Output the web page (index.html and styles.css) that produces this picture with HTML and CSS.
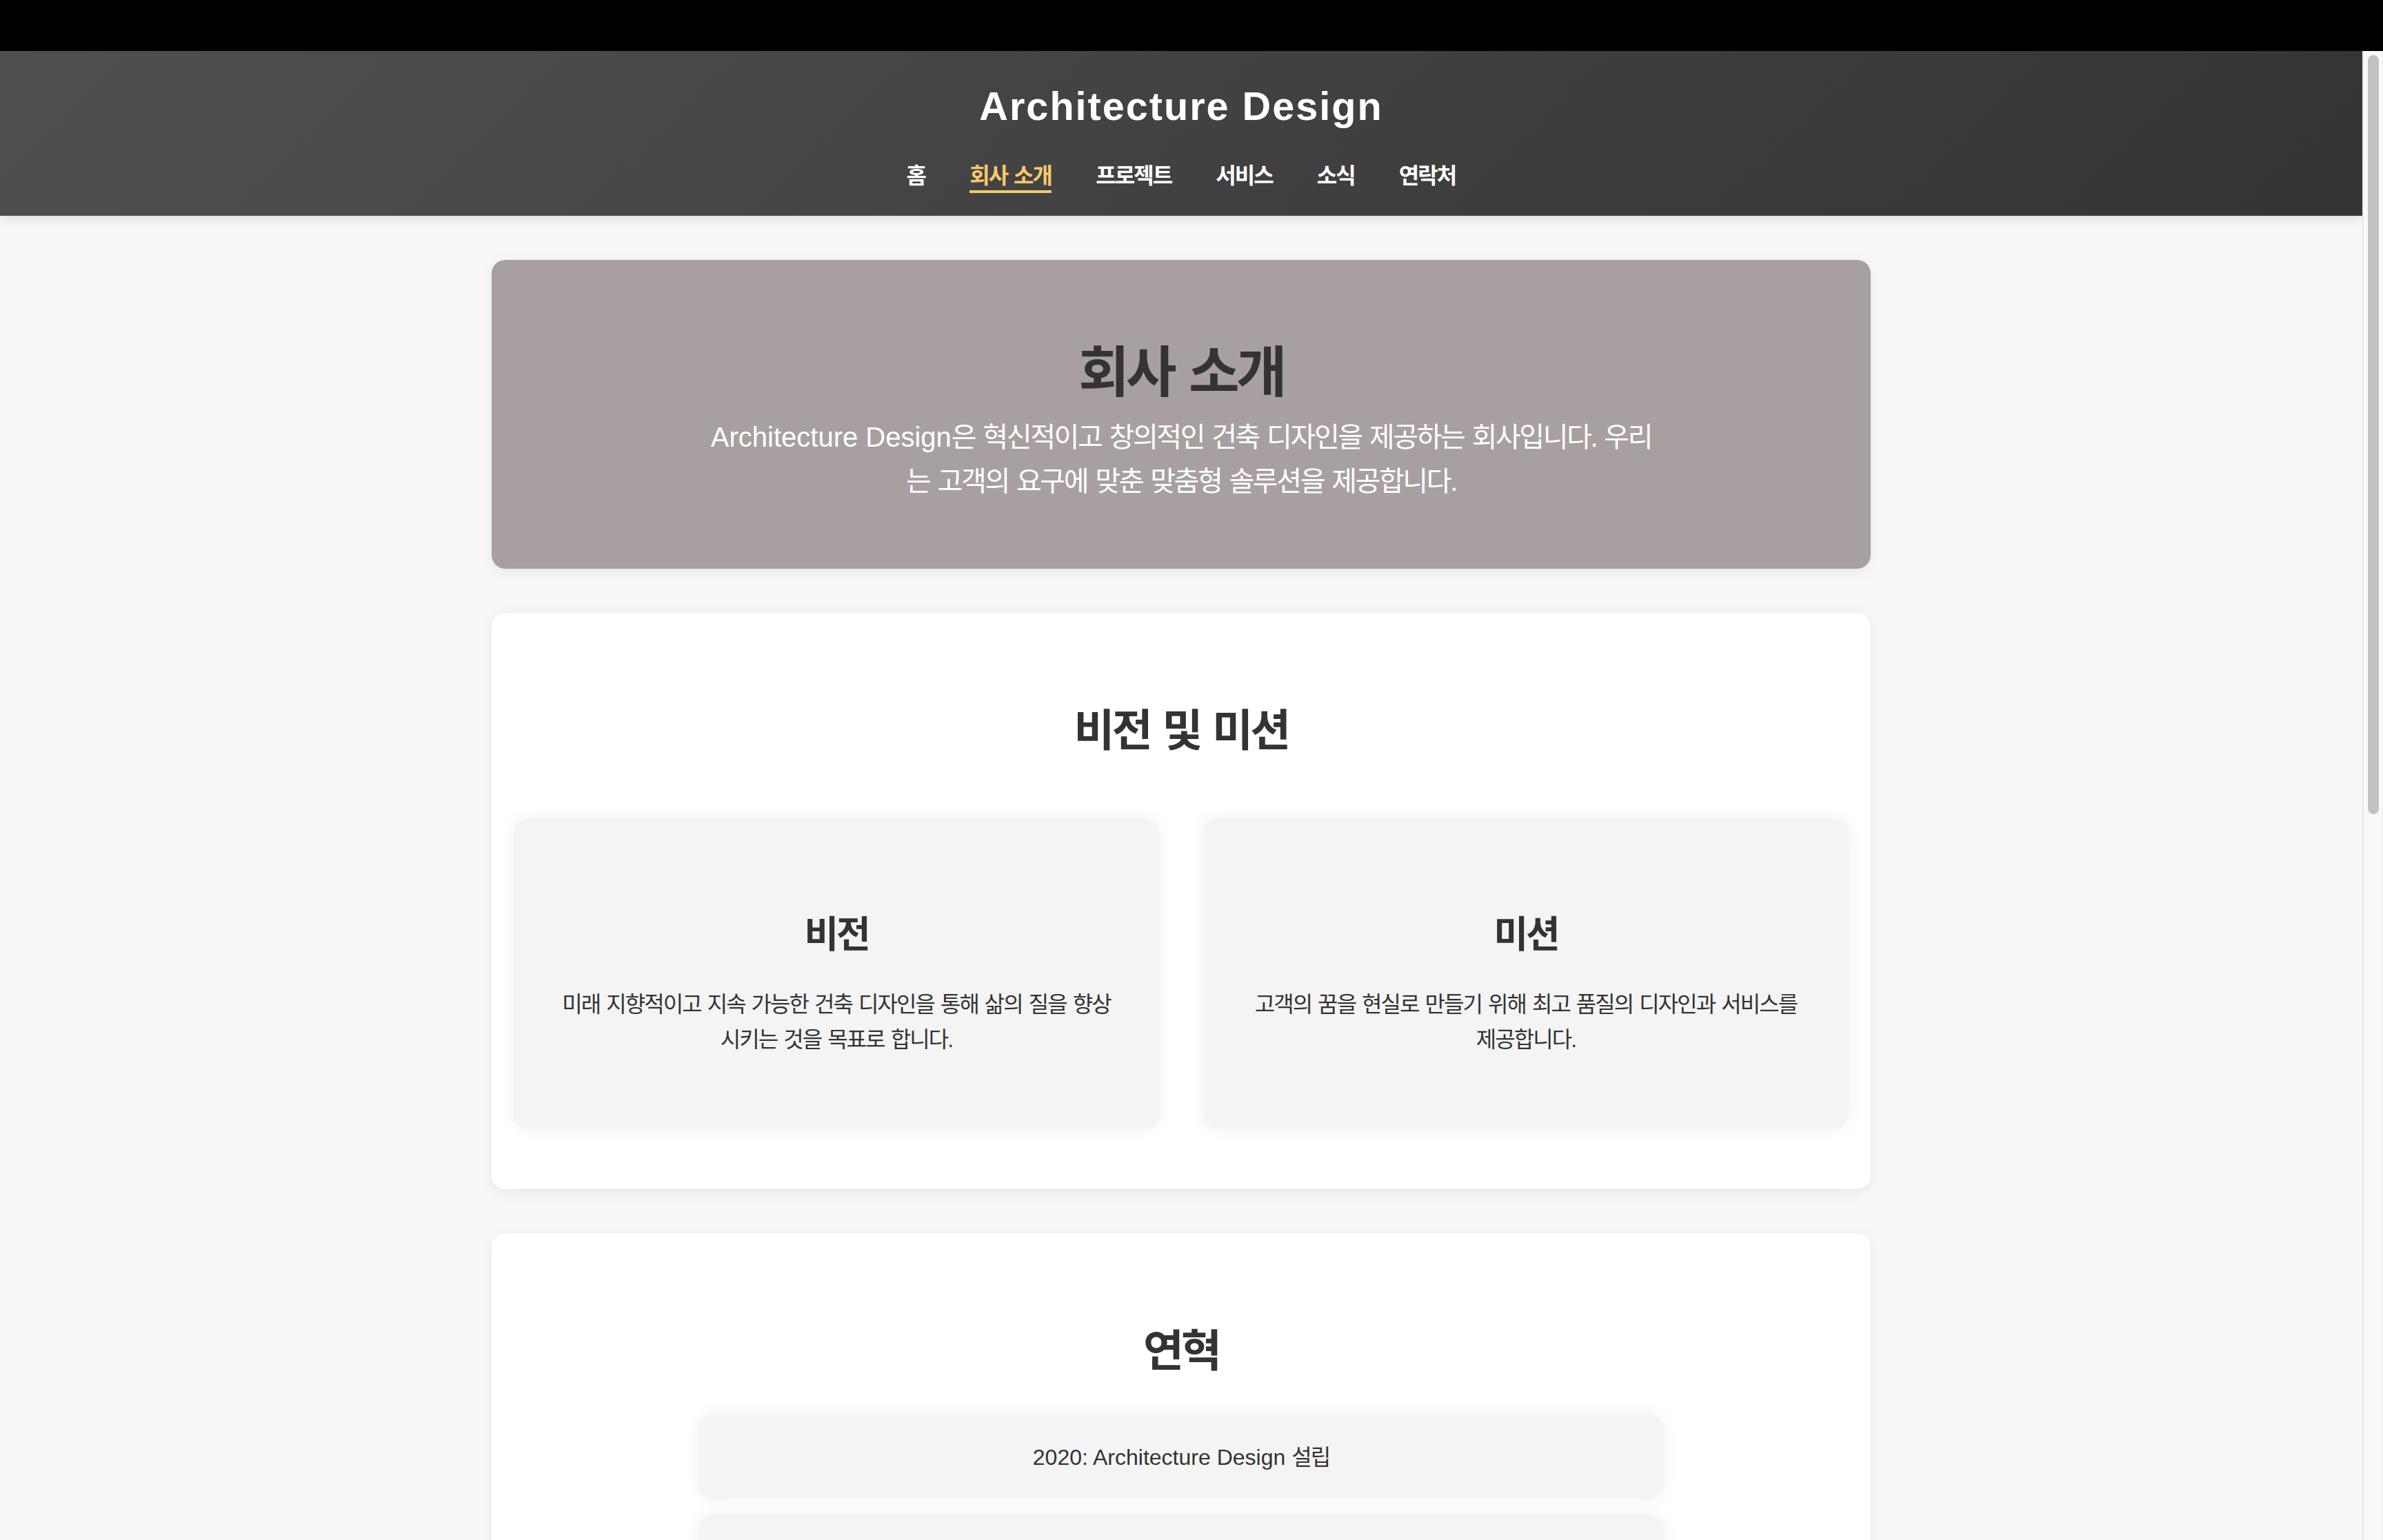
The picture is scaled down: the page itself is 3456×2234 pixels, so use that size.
FILE: index.html
```html
<!DOCTYPE html>
<html lang="ko">
<head>
<meta charset="utf-8">
<title>회사 소개 - Architecture Design</title>
<link rel="stylesheet" href="styles.css">
</head>
<body>
<div class="topbar"></div>
<div class="window">
  <div class="page">
    <header class="site-header">
      <h1 class="logo">Architecture Design</h1>
      <nav class="nav">
        <a href="#" class="nav-link">홈</a>
        <a href="#" class="nav-link active">회사 소개</a>
        <a href="#" class="nav-link">프로젝트</a>
        <a href="#" class="nav-link">서비스</a>
        <a href="#" class="nav-link">소식</a>
        <a href="#" class="nav-link">연락처</a>
      </nav>
    </header>
    <main class="content">
      <section class="hero">
        <h2 class="hero-title">회사 소개</h2>
        <p class="hero-text"><span class="en">Architecture Design</span>은 혁신적이고 창의적인 건축 디자인을 제공하는 회사입니다. 우리는 고객의 요구에 맞춘 맞춤형 솔루션을 제공합니다.</p>
      </section>
      <section class="panel">
        <h2 class="panel-title">비전 및 미션</h2>
        <div class="vm-grid">
          <article class="vm-card">
            <h3 class="vm-title">비전</h3>
            <p class="vm-text">미래 지향적이고 지속 가능한 건축 디자인을 통해 삶의 질을 향상시키는 것을 목표로 합니다.</p>
          </article>
          <article class="vm-card">
            <h3 class="vm-title">미션</h3>
            <p class="vm-text">고객의 꿈을 현실로 만들기 위해 최고 품질의 디자인과 서비스를 제공합니다.</p>
          </article>
        </div>
      </section>
      <section class="panel panel-history">
        <h2 class="panel-title">연혁</h2>
        <ul class="timeline">
          <li class="timeline-item"><span class="en">2020: Architecture Design</span> 설립</li>
          <li class="timeline-item"><span class="en">2021:</span> 첫 번째 대형 프로젝트 완료</li>
          <li class="timeline-item"><span class="en">2023:</span> 해외 지사 설립</li>
        </ul>
      </section>
    </main>
  </div>
  <div class="scrollbar"><div class="scrollbar-thumb"></div></div>
</div>
</body>
</html>
```

FILE: styles.css
```css
html, body {
  margin: 0;
  height: 100%;
}

body {
  background: #000;
  font-family: "Liberation Sans", "Noto Sans CJK KR", sans-serif;
  color: #333;
  overflow: hidden;
}

.topbar {
  height: 74px;
  background: #000;
}

.window {
  display: flex;
  height: 2160px;
  background: #f8f8f8;
}

.page {
  flex: 1;
  min-width: 0;
  overflow: hidden;
}

/* fake browser scrollbar */
.scrollbar {
  flex: none;
  width: 30px;
  box-sizing: border-box;
  padding: 6px 5px 0 6px;
  background: #f9f9f9;
  border-left: 2px solid #e6e6e6;
  border-right: 1px solid #ececec;
}

.scrollbar-thumb {
  height: 1101px;
  border-radius: 8px;
  background: #c2c2c2;
}

/* header */
.site-header {
  position: relative;
  z-index: 1;
  padding: 47px 0 33px;
  text-align: center;
  background: linear-gradient(135deg, #505050 0%, #333333 100%);
  box-shadow: 0 4px 16px rgba(0, 0, 0, 0.12);
}

.logo {
  margin: 0;
  font-size: 57.6px;
  line-height: 66px;
  font-weight: 700;
  letter-spacing: 2px;
  color: #fff;
}

.nav {
  display: flex;
  justify-content: center;
  gap: 64px;
  margin-top: 50px;
}

.nav-link {
  color: #fff;
  text-decoration: none;
  font-size: 32px;
  line-height: 36px;
  font-weight: 600;
  letter-spacing: -0.06em;
  word-spacing: 0.06em;
  padding-bottom: 3px;
  border-bottom: 4px solid transparent;
}

.nav-link.active {
  color: #f5c96b;
  border-bottom-color: #f5c96b;
}

/* content */
.content {
  max-width: 2000px;
  margin: 0 auto;
  padding-top: 64px;
}

.en {
  letter-spacing: 0;
  word-spacing: 0;
}

.hero {
  margin-bottom: 64px;
  padding: 116px 64px 95px;
  text-align: center;
  background: #a8a0a0;
  border-radius: 20px;
  box-shadow: 0 4px 20px rgba(0, 0, 0, 0.08);
}

.hero-title {
  margin: 0 0 13px;
  font-size: 80px;
  line-height: 96px;
  font-weight: 700;
  color: #333;
  letter-spacing: -0.06em;
  word-spacing: 0.06em;
}

.hero-text {
  max-width: 1380px;
  margin: 0 auto;
  font-size: 40px;
  line-height: 64px;
  color: #fff;
  letter-spacing: -0.06em;
  word-spacing: 0.06em;
}

.panel {
  margin-bottom: 64px;
  padding: 133px 32px 88px;
  text-align: center;
  background: #fff;
  border-radius: 20px;
  box-shadow: 0 4px 20px rgba(0, 0, 0, 0.08);
}

.panel-title {
  margin: 0 0 64px;
  font-size: 64px;
  line-height: 77px;
  font-weight: 700;
  color: #333;
  letter-spacing: -0.06em;
  word-spacing: 0.06em;
}

.panel-history .panel-title {
  margin-bottom: 53px;
}

.vm-grid {
  display: grid;
  grid-template-columns: 1fr 1fr;
  gap: 64px;
  margin-top: 89px;
}

.vm-card {
  padding: 137px 68px 103px;
  background: #f4f4f4;
  border-radius: 20px;
  box-shadow: 0 0 24px rgba(0, 0, 0, 0.06);
}

.vm-title {
  margin: 0 0 45px;
  font-size: 54px;
  line-height: 62px;
  font-weight: 700;
  color: #333;
  letter-spacing: -0.06em;
}

.vm-text {
  margin: 0;
  font-size: 32px;
  line-height: 51.2px;
  color: #333;
  letter-spacing: -0.06em;
  word-spacing: 0.06em;
}

.timeline {
  max-width: 1400px;
  margin: 0 auto;
  padding: 0;
  list-style: none;
}

.timeline-item {
  margin-bottom: 24px;
  padding: 37px 32px 33px;
  font-size: 32px;
  line-height: 51.2px;
  letter-spacing: -0.06em;
  word-spacing: 0.06em;
  background: #f4f4f4;
  border-radius: 20px;
  box-shadow: 0 0 24px rgba(0, 0, 0, 0.06);
}
```
